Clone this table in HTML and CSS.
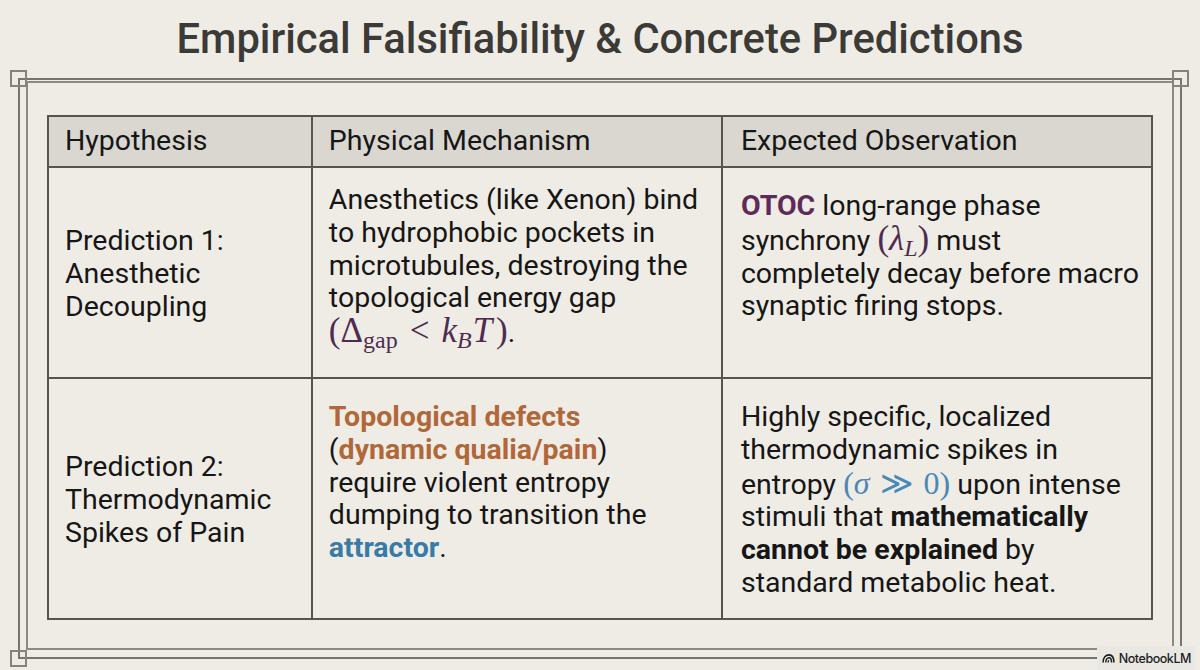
FILE: index.html
```html
<!DOCTYPE html>
<html lang="en">
<head>
<meta charset="utf-8">
<title>Empirical Falsifiability &amp; Concrete Predictions</title>
<link rel="stylesheet" href="styles.css">
</head>
<body>
<div class="page">
  <h1 class="title">Empirical Falsifiability &amp; Concrete Predictions</h1>
  <div class="frame-outer">
    <span class="corner corner-tl"></span>
    <span class="corner corner-tr"></span>
    <span class="corner corner-bl"></span>
    <div class="frame-inner">
      <table class="grid">
        <colgroup>
          <col class="c1">
          <col class="c2">
          <col class="c3">
        </colgroup>
        <thead>
          <tr>
            <th class="k1">Hypothesis</th>
            <th class="k2">Physical Mechanism</th>
            <th class="k3">Expected Observation</th>
          </tr>
        </thead>
        <tbody>
          <tr class="r1">
            <td class="k1 hyp">Prediction 1:<br>Anesthetic<br>Decoupling</td>
            <td class="k2 tall">Anesthetics (like Xenon) bind to hydrophobic pockets in microtubules, destroying the topological energy gap <span class="math purple">(Δ<sub class="rm">gap</sub><span class="rel">&lt;</span><i>k</i><sub><i>B</i></sub><i class="tt">T</i>)</span>.</td>
            <td class="k3"><b class="otoc">OTOC</b> long-range phase synchrony <span class="math purple">(<i>λ</i><sub><i>L</i></sub>)</span> must completely decay before macro synaptic firing stops.</td>
          </tr>
          <tr class="r2">
            <td class="k1 hyp">Prediction 2:<br>Thermodynamic<br>Spikes of Pain</td>
            <td class="k2"><b class="orange">Topological defects</b><br>(<b class="orange">dynamic qualia/pain</b>)<br>require violent entropy dumping to transition the <b class="blue">attractor</b>.</td>
            <td class="k3">Highly specific, localized thermodynamic spikes in entropy <span class="math blue-m">(<i>σ</i><span class="rel">≫</span>0)</span> upon intense stimuli that <b>mathematically cannot be explained</b> by standard metabolic heat.</td>
          </tr>
        </tbody>
      </table>
    </div>
  </div>
  <div class="badge">
    <svg class="badge-icon" viewBox="0 0 14 10" width="13" height="9" aria-hidden="true">
      <path d="M1 9.5 C1 4 4 1 7.5 1 C11 1 13 4 13 9.5" fill="none" stroke="#1f1f1f" stroke-width="1.8"/>
      <path d="M4 9.5 C4 6 5.6 4.2 7.6 4.2 C9.6 4.2 10.4 6 10.4 9.5" fill="none" stroke="#1f1f1f" stroke-width="1.7"/>
      <path d="M6.6 9.5 C6.6 8 7 7.2 7.7 7.2" fill="none" stroke="#1f1f1f" stroke-width="1.6"/>
    </svg>
    <span class="badge-text">NotebookLM</span>
  </div>
</div>
</body>
</html>
```

FILE: styles.css
```css
* { box-sizing: border-box; }

html, body {
  margin: 0;
  padding: 0;
  background: #efece5;
}

.page {
  position: relative;
  width: 1200px;
  height: 670px;
  overflow: hidden;
  background: #efece5;
  font-family: Roboto, "Liberation Sans", Arial, sans-serif;
  color: #161616;
}

.title {
  margin: 0;
  height: 78px;
  display: flex;
  align-items: center;
  justify-content: center;
  padding-bottom: 2px;
  font-size: 41.7px;
  font-weight: 500;
  color: #3b3a37;
}

.frame-outer {
  position: relative;
  margin: 0 18px;
  height: 581px;
  border: 2px solid #76746e;
  padding: 1px 6px 7px 6px;
}

.frame-inner {
  height: 100%;
  border: 2px solid #8c8a84;
  padding: 32px 19px 0 19px;
}

.corner {
  position: absolute;
  width: 17px;
  height: 17px;
  border: 2px solid #85837d;
}
.corner-tl { left: -10px; top: -10px; }
.corner-tr { right: -9px; top: -10px; }
.corner-bl { left: -10px; bottom: -10px; }

.grid {
  width: 1106px;
  border-collapse: collapse;
  border: 2px solid #55544f;
  font-size: 28.5px;
  line-height: 32.8px;
}

.c1 { width: 264px; }
.c2 { width: 411px; }
.c3 { width: 431px; }

.grid th {
  height: 51px;
  background: #d9d7d0;
  border: 2px solid #55544f;
  text-align: left;
  font-weight: 400;
  vertical-align: middle;
  color: #161616;
}

.grid td {
  border: 2px solid #55544f;
  vertical-align: top;
  padding-top: 22px;
  padding-bottom: 18px;
}

.k1 { padding-left: 16px; padding-right: 8px; }
.k2 { padding-left: 16px; padding-right: 12px; }
.k3 { padding-left: 18px; padding-right: 10px; }

.grid td.hyp { vertical-align: middle; }
.grid td.tall { padding-top: 16px; }

.r1 td { height: 211px; }
.r2 td { height: 240px; }

.grid b { font-weight: 700; }

.otoc { color: #5e2a59; }
.orange { color: #b0683a; }
.blue { color: #3a7aa6; }

.math {
  font-family: "Liberation Serif", "Times New Roman", serif;
  font-size: 35px;
  white-space: nowrap;
}
.math i { font-style: italic; }
.math sub {
  font-size: 24px;
  vertical-align: -6px;
  line-height: 0;
}
.math .rm { font-style: normal; }
.math .tt { padding-left: 1px; padding-right: 4px; }
.rel { padding: 0 12px; }

.purple { color: #4e2c52; }

.blue-m {
  color: #4a88b6;
  font-size: 32px;
}
.blue-m .rel { padding: 0 10px; }

.badge {
  position: absolute;
  right: 5px;
  bottom: 0;
  height: 24px;
  padding: 0 4px 0 5px;
  display: flex;
  align-items: center;
  gap: 4px;
  background: #e9e8e2;
}

.badge-icon { display: block; margin-top: 1px; }

.badge-text {
  font-family: Inter, Roboto, "Liberation Sans", sans-serif;
  font-size: 12.5px;
  font-weight: 500;
  color: #1f1f1f;
  letter-spacing: -0.45px;
}
```
